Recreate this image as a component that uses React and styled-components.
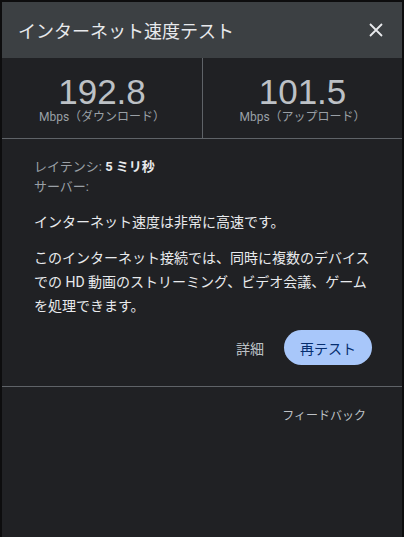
import React from 'react';
import styled, { createGlobalStyle } from 'styled-components';

const GlobalStyle = createGlobalStyle`
  html, body {
    margin: 0;
    padding: 0;
    background: #0d0d0e;
  }
  body {
    font-family: Roboto, "Noto Sans CJK JP", "Liberation Sans", sans-serif;
  }
`;

const Dialog = styled.div`
  margin: 2px 2px 0 2px;
  height: 535px;
  background: #202124;
  color: #e8eaed;
  display: flex;
  flex-direction: column;
`;

const Header = styled.div`
  height: 56px;
  background: #3c4043;
  display: flex;
  align-items: center;
  justify-content: space-between;
  padding: 0 19px 0 16px;
`;

const Title = styled.div`
  font-size: 18px;
  color: #e8eaed;
`;

const Close = styled.button`
  border: none;
  background: transparent;
  padding: 0;
  display: flex;
  color: #e8eaed;
  cursor: pointer;
`;

const Stats = styled.div`
  display: grid;
  grid-template-columns: 1fr 1fr;
  border-bottom: 1px solid #5f6368;
`;

const Stat = styled.div`
  display: flex;
  flex-direction: column;
  align-items: center;
  padding: 16px 0 14px;
  border-left: ${({ $divider }) => ($divider ? '1px solid #5f6368' : 'none')};
`;

const Value = styled.div`
  font-family: "Liberation Sans", Arial, sans-serif;
  font-size: 35px;
  line-height: 36px;
  color: #bdc1c6;
`;

const Unit = styled.div`
  font-size: 12px;
  line-height: 14px;
  color: #9aa0a6;
`;

const Body = styled.div`
  padding: 18px 32px 0 32px;
`;

const InfoLine = styled.div`
  font-size: 13px;
  line-height: 20px;
  color: #9aa0a6;
`;

const Strong = styled.span`
  color: #e8eaed;
  font-weight: 700;
`;

const Para = styled.p`
  margin: ${({ $top }) => $top}px 0 0;
  font-size: 14px;
  line-height: 24px;
  color: #e8eaed;
`;

const Actions = styled.div`
  display: flex;
  justify-content: flex-end;
  align-items: center;
  gap: 20px;
  padding: 12px 30px 21px;
  border-bottom: 1px solid #5f6368;
`;

const TextButton = styled.button`
  border: none;
  background: transparent;
  padding: 0;
  font-family: inherit;
  font-size: 14px;
  color: #bdc1c6;
  cursor: pointer;
`;

const Pill = styled.button`
  border: none;
  background: #a8c7fa;
  color: #062e6f;
  font-family: inherit;
  font-size: 14px;
  height: 35px;
  padding: 0 16px;
  border-radius: 18px;
  cursor: pointer;
`;

const Footer = styled.div`
  display: flex;
  justify-content: flex-end;
  padding: 19px 36px;
`;

const FeedbackLink = styled.span`
  font-size: 12px;
  color: #bdc1c6;
`;

const stats = [
  { value: '192.8', unit: 'Mbps（ダウンロード）' },
  { value: '101.5', unit: 'Mbps（アップロード）' },
];

export default function App() {
  return (
    <>
      <GlobalStyle />
      <Dialog>
        <Header>
          <Title>インターネット速度テスト</Title>
          <Close aria-label="閉じる">
            <svg width="14" height="14" viewBox="0 0 14 14">
              <path d="M1 1L13 13M13 1L1 13" stroke="currentColor" strokeWidth="1.8" />
            </svg>
          </Close>
        </Header>
        <Stats>
          {stats.map((s, i) => (
            <Stat key={s.unit} $divider={i > 0}>
              <Value>{s.value}</Value>
              <Unit>{s.unit}</Unit>
            </Stat>
          ))}
        </Stats>
        <Body>
          <InfoLine>
            レイテンシ: <Strong>5 ミリ秒</Strong>
          </InfoLine>
          <InfoLine>サーバー:</InfoLine>
          <Para $top={13}>インターネット速度は非常に高速です。</Para>
          <Para $top={12}>
            このインターネット接続では、同時に複数のデバイスでの HD 動画のストリーミング、ビデオ会議、ゲームを処理できます。
          </Para>
        </Body>
        <Actions>
          <TextButton>詳細</TextButton>
          <Pill>再テスト</Pill>
        </Actions>
        <Footer>
          <FeedbackLink>フィードバック</FeedbackLink>
        </Footer>
      </Dialog>
    </>
  );
}
